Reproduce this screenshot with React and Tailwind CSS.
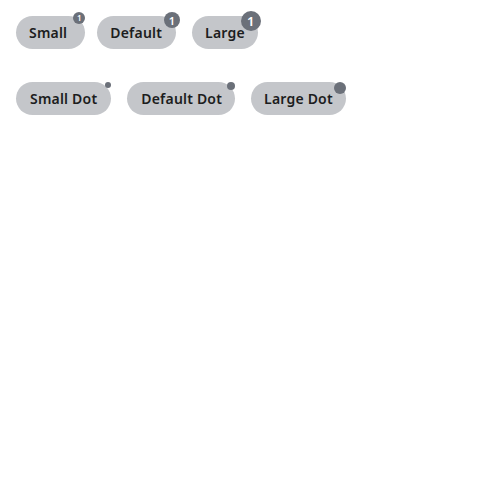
export default function App() {
  const chip =
    "relative inline-flex items-center h-[33px] rounded-[17px] bg-[#c4c6ca] text-[14px] font-semibold text-[#1c1d20] tracking-[0.2px]";
  const badge =
    "absolute rounded-full bg-[#6b7079] text-white leading-none flex items-center justify-center";
  return (
    <div
      className="p-4 bg-white min-h-[500px] flex flex-col gap-[33px]"
      style={{ fontFamily: '"Noto Sans", "Open Sans", sans-serif' }}
    >
      <div className="flex items-start gap-4">
        <div className={chip + " pl-[13px] pr-[18px] -mr-1"}>
          Small
          <span className={badge + " right-0 -top-1 w-3 h-3 text-[8px]"}>1</span>
        </div>
        <div className={chip + " pl-[13px] pr-[14px]"}>
          Default
          <span className={badge + " right-[-4px] -top-1 w-4 h-4 text-[11px]"}>1</span>
        </div>
        <div className={chip + " pl-[13px] pr-[13px]"}>
          Large
          <span className={badge + " right-[-3px] top-[-5px] w-5 h-5 text-[13px]"}>1</span>
        </div>
      </div>
      <div className="flex items-start gap-4">
        <div className={chip + " pl-[14px] pr-[14px]"}>
          Small Dot
          <span className="absolute right-0 top-0 w-[6px] h-[6px] rounded-full bg-[#6b7079]" />
        </div>
        <div className={chip + " pl-[14px] pr-[13px]"}>
          Default Dot
          <span className="absolute right-0 top-0 w-2 h-2 rounded-full bg-[#6b7079]" />
        </div>
        <div className={chip + " px-[13px]"}>
          Large Dot
          <span className="absolute right-0 top-0 w-3 h-3 rounded-full bg-[#6b7079]" />
        </div>
      </div>
    </div>
  );
}
